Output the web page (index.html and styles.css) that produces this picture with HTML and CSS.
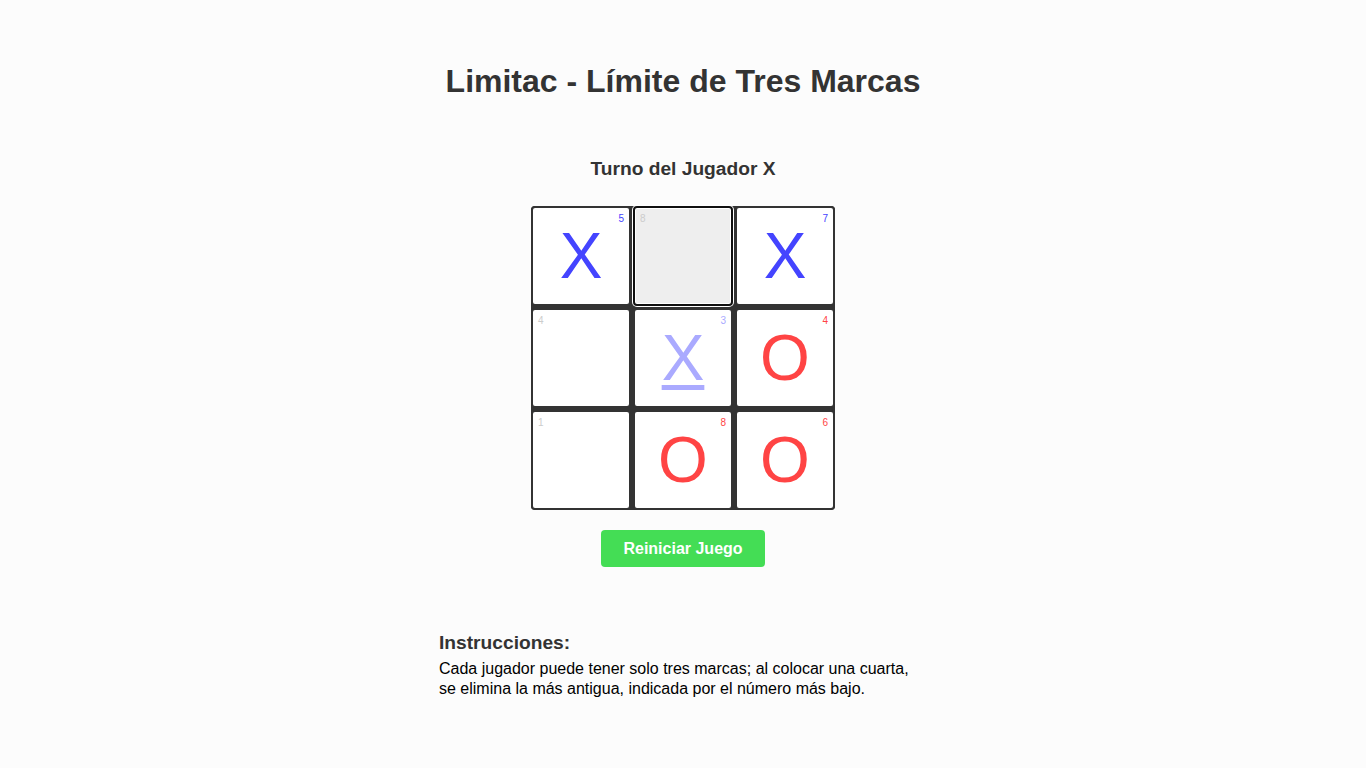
FILE: index.html
```html
<!DOCTYPE html>
<html lang="es">
<head>
<meta charset="utf-8">
<title>Limitac</title>
<link rel="stylesheet" href="styles.css">
</head>
<body>
<main class="app">
  <h1 class="title">Limitac - Límite de Tres Marcas</h1>
  <div class="status">Turno del Jugador X</div>
  <div class="board">
    <button class="cell x"><span class="age">5</span>X</button>
    <button class="cell empty hover"><span class="age">8</span></button>
    <button class="cell x"><span class="age">7</span>X</button>
    <button class="cell empty"><span class="age">4</span></button>
    <button class="cell x old"><span class="age">3</span>X</button>
    <button class="cell o"><span class="age">4</span>O</button>
    <button class="cell empty"><span class="age">1</span></button>
    <button class="cell o"><span class="age">8</span>O</button>
    <button class="cell o"><span class="age">6</span>O</button>
  </div>
  <button class="reset">Reiniciar Juego</button>
  <section class="instructions">
    <h3 class="instructions-title">Instrucciones:</h3>
    <p class="instructions-text">Cada jugador puede tener solo tres marcas; al colocar una cuarta, se elimina la más antigua, indicada por el número más bajo.</p>
  </section>
</main>
</body>
</html>
```

FILE: styles.css
```css
* { box-sizing: border-box; }

html, body {
  margin: 0;
  padding: 0;
  background: #fcfcfc;
  font-family: "Liberation Sans", Arial, sans-serif;
  color: #333;
}

.app {
  display: flex;
  flex-direction: column;
  align-items: center;
  padding-top: 63px;
}

.title {
  margin: 0;
  font-size: 32px;
  font-weight: bold;
  color: #333;
  line-height: 37px;
}

.status {
  margin-top: 58px;
  font-size: 19.2px;
  font-weight: bold;
  color: #333;
  line-height: 22px;
}

.board {
  margin-top: 26px;
  display: grid;
  grid-template-columns: repeat(3, 100px);
  grid-template-rows: repeat(3, 100px);
  gap: 2px;
  background: #333;
  border-radius: 4px;
}

.cell {
  position: relative;
  display: flex;
  align-items: center;
  justify-content: center;
  width: 100px;
  height: 100px;
  padding: 0;
  margin: 0;
  border: 2px solid #333;
  border-radius: 4px;
  background: #fff;
  font-family: "Liberation Sans", Arial, sans-serif;
  font-size: 64px;
  line-height: 1;
  cursor: pointer;
}

.cell.x { color: #4444ff; }
.cell.o { color: #ff4444; }
.cell.old {
  color: #aaaaff;
  text-decoration: underline;
  text-decoration-thickness: 5px;
  text-underline-offset: 5px;
}

.cell.hover {
  background: #eeeeee;
  border-color: #101010;
  box-shadow: 0 0 0 1px #fff, inset 0 0 0 1px #fff;
}

.age {
  position: absolute;
  top: 5px;
  right: 5px;
  font-size: 10px;
  line-height: 11px;
  display: inline-block;
}

.cell.empty .age {
  right: auto;
  left: 5px;
  color: #cccccc;
}

.reset {
  margin-top: 20px;
  height: 37px;
  padding: 0 22px;
  border: none;
  border-radius: 4px;
  background: #44dd55;
  color: #fff;
  font-family: "Liberation Sans", Arial, sans-serif;
  font-size: 16px;
  font-weight: bold;
  cursor: pointer;
}

.instructions {
  margin-top: 65px;
  width: 488px;
}

.instructions-title {
  margin: 0 0 5px;
  font-size: 19.2px;
  font-weight: bold;
  color: #333;
  line-height: 22px;
}

.instructions-text {
  margin: 0;
  font-size: 16px;
  line-height: 20px;
  color: #000;
}
```
